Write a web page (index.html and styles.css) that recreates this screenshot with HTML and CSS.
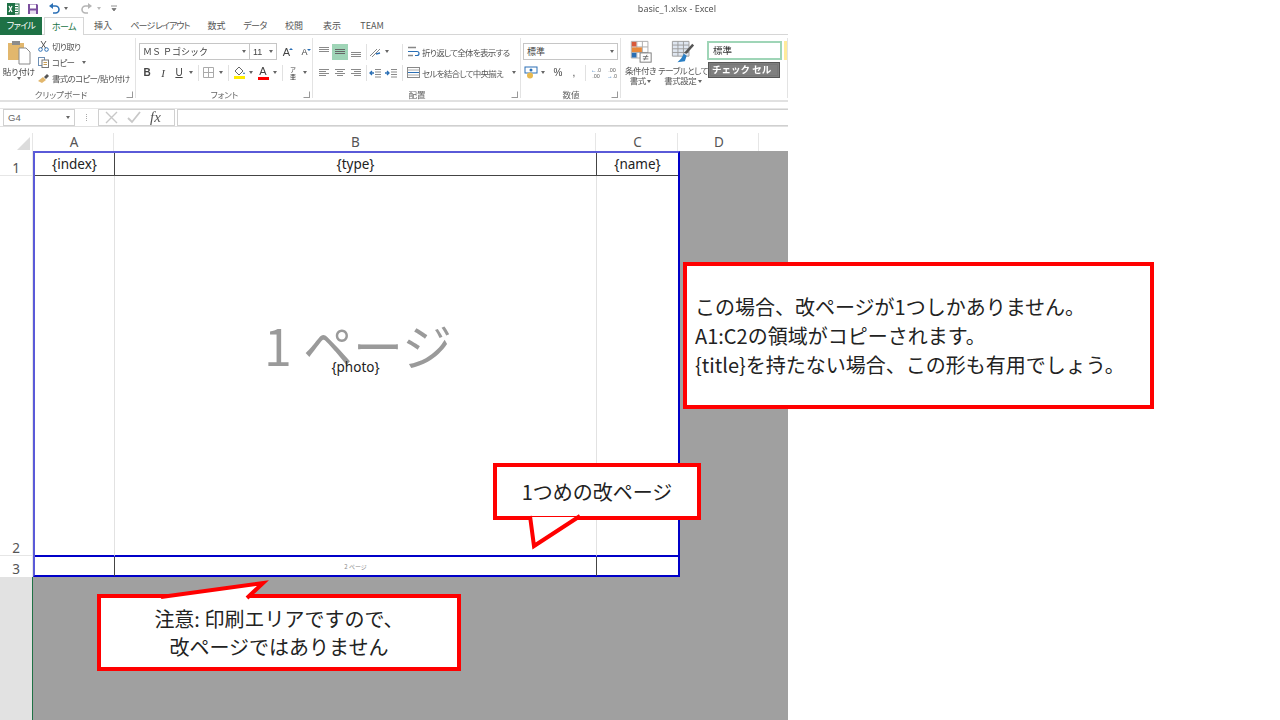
FILE: index.html
```html
<!DOCTYPE html>
<html lang="ja">
<head>
  <meta charset="UTF-8">
  <title>basic_1.xlsx - Excel</title>
  <link rel="stylesheet" href="styles.css">
</head>
<body>

  <div class="excel">
    <!-- Quick access bar -->
    <div class="qat">
      <svg class="qat-icon" width="14" height="14" viewBox="0 0 14 14"><rect x="6" y="2" width="7" height="10" fill="#fff" stroke="#1e7145"/><path d="M8 4.500h4M8 7h4M8 9.500h4" stroke="#1e7145"/><rect x="1" y="1" width="8" height="12" fill="#1e7145"/><path d="M3 4l3 6M6 4l-3 6" stroke="#fff" stroke-width="1.200"/></svg>
      <svg class="qat-icon save" width="12" height="12" viewBox="0 0 12 12"><path d="M1 1h9l1 1v9H1z" fill="#7b4f9e"/><rect x="3" y="1.500" width="6" height="4" fill="#fff"/><rect x="3" y="7.500" width="6" height="3.500" fill="#e6dcef"/></svg>
      <svg class="qat-icon undo" width="12" height="12" viewBox="0 0 12 12"><path d="M3 3h4.500a3 3 0 0 1 0 7H5" fill="none" stroke="#2a6fb5" stroke-width="1.600"/><path d="M5 0L1 3l4 3z" fill="#2a6fb5"/></svg>
      <span class="caret qat-caret"></span>
      <svg class="qat-icon redo" width="12" height="12" viewBox="0 0 12 12"><path d="M9 3H4.500a3 3 0 0 0 0 7H7" fill="none" stroke="#b5b5b5" stroke-width="1.600"/><path d="M7 0l4 3-4 3z" fill="#b5b5b5"/></svg>
      <span class="caret qat-caret light"></span>
      <svg class="qat-icon more" width="6" height="7" viewBox="0 0 6 7"><path d="M0 1h6M1 3.500h4L3 6z" stroke="#777" fill="#777" stroke-width=".8"/></svg>
      <div class="title">basic_1.xlsx - Excel</div>
    </div>

    <!-- Tabs -->
    <div class="tabs">
      <div class="tab file kana">ファイル</div>
      <div class="tab home kana">ホーム</div>
      <div class="tab">挿入</div>
      <div class="tab layout">ページ レイアウト</div>
      <div class="tab">数式</div>
      <div class="tab kana">データ</div>
      <div class="tab">校閲</div>
      <div class="tab">表示</div>
      <div class="tab">TEAM</div>
    </div>

    <!-- Ribbon -->
    <div class="ribbon">
      <div class="group clipboard">
        <div class="group-body">
          <div class="paste">
            <svg width="24" height="25" viewBox="0 0 24 25"><rect x="1" y="3" width="16" height="17" fill="#e2b76d"/><rect x="5" y="1" width="8" height="4" fill="#8c8c8c"/><path d="M12 8h7l4 4v12H12z" fill="#fff" stroke="#8a8a8a"/></svg>
            <span>貼り付け</span>
            <span class="caret"></span>
          </div>
          <div class="clip-list">
            <div class="clip-item">
              <svg width="11" height="11" viewBox="0 0 11 11"><circle cx="2.500" cy="8.500" r="1.800" fill="none" stroke="#2a6fb5"/><circle cx="8.500" cy="8.500" r="1.800" fill="none" stroke="#2a6fb5"/><path d="M3.500 7L8 0M7.500 7L3 0" stroke="#555"/></svg>
              切り取り
            </div>
            <div class="clip-item">
              <svg width="11" height="11" viewBox="0 0 11 11"><rect x=".5" y=".5" width="6" height="8" fill="#fff" stroke="#6d8fb5"/><rect x="4" y="3" width="6.500" height="7.500" fill="#fff" stroke="#777"/><path d="M5.500 5.500h3.500M5.500 7.500h3.500" stroke="#c69c55"/></svg>
              コピー <span class="caret"></span>
            </div>
            <div class="clip-item">
              <svg width="11" height="11" viewBox="0 0 11 11"><path d="M0 8l5-4 3 3-4 3z" fill="#e2b76d"/><path d="M6 4l3-3 2 2-3 3z" fill="#555"/></svg>
              書式のコピー/貼り付け
            </div>
          </div>
        </div>
        <div class="group-label">クリップボード</div>
        <span class="launcher"></span>
      </div>

      <div class="group font">
        <div class="group-body stack">
          <div class="row">
            <div class="select font-name">ＭＳ Ｐゴシック<span class="caret"></span></div>
            <div class="select font-size">11<span class="caret"></span></div>
            <span class="grow">A<i class="up"></i></span>
            <span class="grow small">A<i class="down"></i></span>
          </div>
          <div class="row low">
            <span class="btn bold">B</span>
            <span class="btn italic">I</span>
            <span class="btn under">U</span>
            <span class="caret-slot"><span class="caret"></span></span>
            <span class="sep"></span>
            <span class="btn">
              <svg width="12" height="12" viewBox="0 0 12 12"><path d="M.5.500h10v10H.5zM5.500.500v10M.5 5.500h10" fill="none" stroke="#aaa"/></svg>
            </span>
            <span class="caret-slot"><span class="caret"></span></span>
            <span class="sep"></span>
            <span class="btn color">
              <svg width="13" height="10" viewBox="0 0 13 10"><path d="M2 5l4-4 4 4-4 4z" fill="#fff" stroke="#666"/><path d="M11 6l1 2h-2z" fill="#2a6fb5"/></svg>
              <i class="swatch yellow"></i>
            </span>
            <span class="caret-slot"><span class="caret"></span></span>
            <span class="btn color letter">A<i class="swatch red"></i></span>
            <span class="caret-slot"><span class="caret"></span></span>
            <span class="sep"></span>
            <span class="btn phonetic">ア<br>亜</span>
            <span class="caret-slot"><span class="caret"></span></span>
          </div>
        </div>
        <div class="group-label">フォント</div>
        <span class="launcher"></span>
      </div>

      <div class="group align">
        <div class="group-body stack">
          <div class="row">
            <span class="btn"><svg width="12" height="12" viewBox="0 0 12 12"><path d="M1 1.500h10M1 3.500h10M1 5.500h10" stroke="#8a8a8a"/></svg></span>
            <span class="btn active"><svg width="12" height="12" viewBox="0 0 12 12"><path d="M1 3.500h10M1 5.500h10M1 7.500h10" stroke="#666"/></svg></span>
            <span class="btn"><svg width="12" height="12" viewBox="0 0 12 12"><path d="M1 6.500h10M1 8.500h10M1 10.500h10" stroke="#8a8a8a"/></svg></span>
            <span class="sep"></span>
            <span class="btn"><svg width="12" height="12" viewBox="0 0 12 12"><path d="M1 10l7-7M3 11l8-8" stroke="#888"/><path d="M7 8l4-1" stroke="#2a6fb5" stroke-width="1.500"/></svg></span>
            <span class="caret-slot"><span class="caret"></span></span>
            <span class="sep wide"></span>
            <span class="wrap-item">
              <svg width="13" height="13" viewBox="0 0 13 13"><path d="M1 2.500h8M1 10.500h5" stroke="#888" stroke-width="1.500"/><path d="M1 6.500h9a1.500 1.500 0 0 1 0 4H8" fill="none" stroke="#2a6fb5" stroke-width="1.200"/></svg>
              折り返して全体を表示する
            </span>
          </div>
          <div class="row low">
            <span class="btn"><svg width="12" height="12" viewBox="0 0 12 12"><path d="M1 2.500h10M1 4.500h7M1 6.500h10M1 8.500h7" stroke="#8a8a8a"/></svg></span>
            <span class="btn"><svg width="12" height="12" viewBox="0 0 12 12"><path d="M1 2.500h10M3 4.500h6M1 6.500h10M3 8.500h6" stroke="#8a8a8a"/></svg></span>
            <span class="btn"><svg width="12" height="12" viewBox="0 0 12 12"><path d="M1 2.500h10M4 4.500h7M1 6.500h10M4 8.500h7" stroke="#8a8a8a"/></svg></span>
            <span class="sep"></span>
            <span class="btn"><svg width="12" height="12" viewBox="0 0 12 12"><path d="M6 2.500h6M6 5h6M6 7.500h6M6 10h6" stroke="#8a8a8a"/><path d="M5 6H1M3 4L1 6l2 2" fill="none" stroke="#2a6fb5" stroke-width="1.300"/></svg></span>
            <span class="btn"><svg width="12" height="12" viewBox="0 0 12 12"><path d="M6 2.500h6M6 5h6M6 7.500h6M6 10h6" stroke="#8a8a8a"/><path d="M0 6h4M2 4l2 2-2 2" fill="none" stroke="#2a6fb5" stroke-width="1.300"/></svg></span>
            <span class="sep merge-sep"></span>
            <span class="wrap-item">
              <svg width="13" height="13" viewBox="0 0 13 13"><rect x=".5" y="1.500" width="12" height="10" fill="#fff" stroke="#888"/><path d="M1 6.500h11" stroke="#2a6fb5"/><path d="M.5 4h12M.5 9h12" stroke="#aaa"/></svg>
              セルを結合して中央揃え
              <span class="caret merge-caret"></span>
            </span>
          </div>
        </div>
        <div class="group-label">配置</div>
        <span class="launcher"></span>
      </div>

      <div class="group number">
        <div class="group-body stack">
          <div class="row">
            <div class="select number-format">標準<span class="caret"></span></div>
          </div>
          <div class="row low">
            <span class="btn"><svg width="14" height="13" viewBox="0 0 14 13"><rect x="1" y="1" width="12" height="6" fill="#fff" stroke="#2a6fb5"/><circle cx="7" cy="4" r="1.500" fill="#2a6fb5"/><circle cx="6" cy="9.500" r="3" fill="#e8b94e"/></svg></span>
            <span class="caret-slot"><span class="caret"></span></span>
            <span class="btn num-text pct">%</span>
            <span class="btn num-text">,</span>
            <span class="sep"></span>
            <span class="btn dec"><b>←</b>.0<br>.00</span>
            <span class="btn dec">.00<br><b>→</b>.0</span>
          </div>
        </div>
        <div class="group-label">数値</div>
        <span class="launcher"></span>
      </div>

      <div class="group styles">
        <div class="group-body">
          <div class="big-btn cond">
            <svg width="24" height="26" viewBox="0 0 24 26"><path d="M1.500 1.500h18v18h-18zM1.500 7.500h18M1.500 13.500h18M7.500 1.500v18M13.500 1.500v18" fill="#fff" stroke="#aaa"/><rect x="2" y="2" width="5" height="5" fill="#d8593a"/><rect x="2" y="8" width="11" height="5" fill="#e8893a"/><rect x="2" y="14" width="5" height="5" fill="#2a6fb5"/><rect x="11" y="14" width="12" height="10" fill="#fff" stroke="#777"/><path d="M14 18h6M14 20.500h6M18.500 16l-3 6" stroke="#555" stroke-width=".8"/></svg>
            <span>条件付き<br>書式 <i class="caret"></i></span>
          </div>
          <div class="big-btn table">
            <svg width="26" height="26" viewBox="0 0 26 26"><path d="M1.500 1.500h18v16h-18zM1.500 5.500h18M1.500 9.500h18M1.500 13.500h18M7.500 1.500v16M13.500 1.500v16" fill="#dfe6f0" stroke="#9a9a9a"/><path d="M23 4l2 2-8 9-3-1z" fill="#555"/><path d="M14 15l3 2-2 6-8 1 4-4z" fill="#2a7fc5"/></svg>
            <span>テーブルとして<br>書式設定 <i class="caret"></i></span>
          </div>
          <div class="gallery">
            <div class="gallery-row">
              <div class="style-normal">標準</div>
              <div class="style-yellow"></div>
            </div>
            <div class="style-check">チェック セル</div>
          </div>
        </div>
      </div>
    </div>

    <!-- Formula bar -->
    <div class="formula-bar">
      <div class="name-box">G4<span class="caret"></span></div>
      <span class="dots"></span>
      <div class="fx-box">
        <svg width="13" height="13" viewBox="0 0 13 13"><path d="M1 1l11 11M12 1L1 12" stroke="#c8c8c8" stroke-width="1.400"/></svg>
        <svg width="14" height="13" viewBox="0 0 14 13"><path d="M1 7l4 4 8-10" fill="none" stroke="#c8c8c8" stroke-width="1.800"/></svg>
        <span class="fx">fx</span>
      </div>
      <div class="formula-input"></div>
    </div>

    <!-- Sheet -->
    <div class="col-heads">
      <div class="corner"><i></i></div>
      <div class="col-head a">A</div>
      <div class="col-head b">B</div>
      <div class="col-head c">C</div>
      <div class="col-head d">D</div>
    </div>
    <div class="sheet">
      <div class="row-heads">
        <div class="row-head r1">1</div>
        <div class="row-head r2">2</div>
        <div class="row-head r3">3</div>
        <div class="row-rest"></div>
      </div>
      <div class="canvas">
        <div class="print-area">
          <div class="cell">{index}</div>
          <div class="cell">{type}</div>
          <div class="cell last">{name}</div>
          <div class="cell tall"></div>
          <div class="cell tall photo">
            <div class="page-mark">1 ページ</div>
            <div class="photo-name">{photo}</div>
          </div>
          <div class="cell tall last"></div>
          <div class="cell foot"></div>
          <div class="cell foot tiny">2 ページ</div>
          <div class="cell foot last"></div>
        </div>
      </div>
    </div>
  </div>

  <!-- Callouts over the screenshot -->
  <div class="callout note-main">
    この場合、改ページが1つしかありません。<br>
    A1:C2の領域がコピーされます。<br>
    {title}を持たない場合、この形も有用でしょう。
  </div>

  <div class="callout note-break">
    <svg class="tail" width="208" height="100" viewBox="0 0 208 100"><path d="M37 54l4 30 46-30z" fill="#fff"/><path d="M37 53l4 30 46-30" fill="none" stroke="#f00" stroke-width="4"/></svg>
    <span class="note-text">1つめの改ページ</span>
  </div>

  <div class="callout note-area">
    <svg class="tail" width="200" height="30" viewBox="0 0 200 30"><path d="M64 4L166-11 150 4z" fill="#fff"/><path d="M64 3L166-11 150 4" fill="none" stroke="#f00" stroke-width="4" stroke-miterlimit="10"/></svg>
    <span class="note-text">注意: 印刷エリアですので、<br>改ページではありません</span>
  </div>

</body>
</html>
```

FILE: styles.css
```css
/* General */
html, body {
  margin: 0;
  height: 100%;
  overflow: hidden;
  background: #fff;
}

body {
  position: relative;
  font-family: "Noto Sans CJK JP", "Noto Sans", sans-serif;
  color: #444;
}

.excel {
  width: 788px;
  height: 720px;
  display: flex;
  flex-direction: column;
  overflow: hidden;
}

.caret {
  display: inline-block;
  width: 0;
  height: 0;
  border-left: 2.5px solid transparent;
  border-right: 2.5px solid transparent;
  border-top: 3px solid #666;
  vertical-align: middle;
}

/* Quick access bar */
.qat {
  height: 17px;
  display: flex;
  align-items: center;
  padding-left: 6px;
  flex: none;
  filter: blur(.3px);
}

.qat-icon.save { margin-left: 7px; }
.qat-icon.undo { margin-left: 9px; }
.qat-icon.redo { margin-left: 13px; }
.qat-icon.more { margin-left: 10px; }

.qat-caret { margin-left: 4px; }
.qat-caret.light { border-top-color: #bbb; }

.title {
  margin-left: auto;
  margin-right: 72px;
  font-size: 9px;
  color: #555;
  font-family: "Noto Sans", sans-serif;
}

/* Tabs */
.tabs {
  height: 18px;
  flex: none;
  display: grid;
  grid-template-columns: 44px 40px 38px 76px 37px 40px 38px 38px 42px;
  box-shadow: inset 0 -1px #d6d6d6;
  font-feature-settings: "palt";
}

.tab {
  font-size: 9px;
  line-height: 18px;
  text-align: center;
  color: #555;
  white-space: nowrap;
}

.tab.kana { letter-spacing: -.6px; }
.tab.layout { letter-spacing: -1px; }

.tab.file {
  width: 42px;
  background: #1e7145;
  color: #fff;
}

.tab.home {
  color: #217346;
  background: #fff;
  border: 1px solid #d6d6d6;
  border-bottom: none;
  line-height: 17px;
  height: 18px;
  box-sizing: border-box;
}

/* Ribbon */
.ribbon {
  height: 65px;
  flex: none;
  display: grid;
  grid-template-columns: 136px 177px 208px 100px 1fr;
  border-bottom: 2px solid #e1e1e1;
  overflow: hidden;
  font-feature-settings: "palt";
  filter: blur(.3px);
}

.group {
  position: relative;
  display: flex;
  flex-direction: column;
  font-size: 9px;
}

.group::after {
  content: "";
  position: absolute;
  right: 0;
  top: 3px;
  bottom: 2px;
  width: 1px;
  background: #e3e3e3;
}

.group-body {
  height: 53px;
  display: flex;
}

.group-body.stack {
  flex-direction: column;
  padding-top: 8px;
  box-sizing: border-box;
}

.group-label {
  font-size: 8.5px;
  line-height: 12px;
  text-align: center;
  color: #666;
}

.launcher {
  position: absolute;
  right: 3px;
  bottom: 2px;
  width: 5px;
  height: 5px;
  border: 1px solid #999;
  border-top-color: transparent;
  border-left-color: transparent;
}

/* Clipboard */
.clipboard .group-label {
  padding-right: 14px;
}

.paste {
  width: 38px;
  flex: none;
  display: flex;
  flex-direction: column;
  align-items: center;
  padding-top: 5px;
  font-size: 8.5px;
  line-height: 11px;
  box-sizing: border-box;
}

.paste span:nth-child(2) {
  margin-top: 1px;
  white-space: nowrap;
}

.clip-list {
  padding-top: 3px;
}

.clip-item {
  height: 16px;
  display: flex;
  align-items: center;
  gap: 3px;
  font-size: 8.5px;
  letter-spacing: -.7px;
  white-space: nowrap;
  color: #555;
}

.clip-item .caret {
  margin-left: 5px;
}

/* Ribbon rows */
.row {
  height: 17px;
  display: flex;
  align-items: center;
  padding-left: 3px;
  flex: none;
}

.row.low {
  margin-top: 4px;
}

.btn {
  width: 16px;
  height: 16px;
  flex: none;
  display: flex;
  align-items: center;
  justify-content: center;
  font-family: "Liberation Sans", sans-serif;
  font-size: 10px;
  box-sizing: border-box;
}

.btn.active {
  background: #9fd5b7;
}

.bold { font-weight: bold; }
.italic { font-style: italic; font-family: "Liberation Serif", serif; font-size: 11px; }
.under { text-decoration: underline; }

.caret-slot {
  width: 8px;
  height: 16px;
  flex: none;
  display: flex;
  align-items: center;
  justify-content: center;
}

.sep {
  width: 1px;
  height: 16px;
  background: #e1e1e1;
  margin: 0 2px 0 3px;
  flex: none;
}

.align .sep { margin: 0 0 0 2px; }
.align .sep.wide { margin: 0 4px 0 11px; }
.align .sep.merge-sep { margin: 0 4px 0 3px; }

.select {
  height: 17px;
  border: 1px solid #c6c6c6;
  box-sizing: border-box;
  display: flex;
  align-items: center;
  justify-content: space-between;
  padding: 0 3px;
  font-size: 9px;
  background: #fff;
  flex: none;
}

.font-name {
  width: 111px;
  font-feature-settings: normal;
}

.font-size {
  width: 28px;
  margin-left: -1px;
  font-family: "Liberation Sans", sans-serif;
}

.grow {
  width: 17px;
  margin-left: 1px;
  font-size: 11px;
  text-align: center;
  font-family: "Liberation Sans", sans-serif;
  position: relative;
}

.grow.small {
  font-size: 9px;
}

.grow i {
  position: absolute;
  right: 2px;
  top: 2px;
  width: 0;
  height: 0;
  border-left: 2px solid transparent;
  border-right: 2px solid transparent;
}

.grow i.up { border-bottom: 2px solid #2a6fb5; }
.grow i.down { border-top: 2px solid #2a6fb5; }

.btn.color {
  flex-direction: column;
}

.btn.letter {
  font-size: 11px;
  line-height: 11px;
}

.swatch {
  display: block;
  width: 11px;
  height: 3px;
  margin-top: 0;
}

.swatch.yellow { background: #ffec00; }
.swatch.red { background: #f00; }

.phonetic {
  font-family: "Noto Sans CJK JP", sans-serif;
  font-size: 6px;
  line-height: 7px;
  text-align: center;
}

.wrap-item {
  display: flex;
  align-items: center;
  gap: 2px;
  font-size: 8.5px;
  letter-spacing: -.7px;
  white-space: nowrap;
  color: #555;
}

.merge-caret {
  margin-left: 7px;
}

/* Number */
.number .row {
  padding-left: 2px;
}

.number-format {
  width: 95px;
}

.num-text {
  font-size: 10px;
}

.pct {
  margin-left: 3px;
}

.dec {
  font-size: 5.5px;
  line-height: 6px;
  text-align: center;
  display: block;
  padding-top: 2px;
  color: #666;
}

.dec b {
  color: #2a6fb5;
  font-weight: normal;
}

/* Styles */
.big-btn {
  flex: none;
  display: flex;
  flex-direction: column;
  align-items: center;
  padding-top: 5px;
  font-size: 8.5px;
  letter-spacing: -.5px;
  line-height: 10px;
  text-align: center;
  white-space: nowrap;
  color: #555;
}

.big-btn svg {
  margin-bottom: 1px;
  height: 24px;
}

.big-btn i {
  vertical-align: middle;
}

.big-btn.cond { width: 39px; }
.big-btn.table { width: 46px; }

.gallery {
  margin-left: 1px;
  padding-top: 6px;
  flex: 1;
  min-width: 0;
}

.gallery-row {
  display: flex;
  gap: 2px;
}

.style-normal {
  width: 75px;
  height: 19px;
  border: 2px solid #9fd5b7;
  box-sizing: border-box;
  font-size: 9.5px;
  line-height: 15px;
  padding-left: 4px;
  color: #333;
  flex: none;
}

.style-yellow {
  flex: 1;
  height: 19px;
  background: #ffeb9c;
}

.style-check {
  width: 72px;
  height: 16px;
  margin: 2px 0 0 1px;
  background: #7f7f7f;
  border: 1px solid #555;
  outline: 1px solid #777;
  outline-offset: -3px;
  box-sizing: border-box;
  color: #fff;
  font-size: 9.5px;
  font-weight: bold;
  line-height: 13px;
  padding-left: 3px;
  white-space: nowrap;
  font-feature-settings: normal;
}

/* Formula bar */
.formula-bar {
  height: 17px;
  flex: none;
  margin-top: 6px;
  display: flex;
  align-items: stretch;
  border-top: 1px solid #e6e6e6;
  border-bottom: 1px solid #e1e1e1;
  box-sizing: content-box;
  padding-left: 3px;
  filter: blur(.3px);
}

.name-box, .fx-box, .formula-input {
  border: 1px solid #d0d0d0;
  box-sizing: border-box;
  background: #fff;
}

.name-box {
  width: 72px;
  display: flex;
  align-items: center;
  justify-content: space-between;
  padding: 0 4px;
  font-size: 9.5px;
  font-family: "Liberation Sans", sans-serif;
  color: #666;
}

.dots {
  width: 1px;
  margin: 5px 10px 5px 11px;
  border-left: 1px dotted #aaa;
}

.fx-box {
  width: 77px;
  display: flex;
  align-items: center;
  gap: 9px;
  padding-left: 6px;
}

.fx {
  font-family: "Liberation Serif", serif;
  font-style: italic;
  font-size: 15px;
  color: #555;
}

.formula-input {
  flex: 1;
  margin-left: 2px;
  border-right: none;
}

/* Sheet headers */
.col-heads {
  height: 18px;
  flex: none;
  margin-top: 6px;
  display: grid;
  grid-template-columns: 33px 81px 482px 82px 81px 1fr;
  font-size: 13.5px;
  color: #555;
  font-family: "Noto Sans", sans-serif;
  box-sizing: content-box;
}

.corner {
  border-right: 1px solid #e6e6e6;
  position: relative;
}

.corner i {
  position: absolute;
  right: 2px;
  bottom: 1px;
  width: 0;
  height: 0;
  border-left: 13px solid transparent;
  border-bottom: 13px solid #dcdcdc;
}

.col-head {
  text-align: center;
  line-height: 18px;
  padding-left: 2px;
  border-right: 1px solid #e6e6e6;
}

.sheet {
  flex: 1;
  display: flex;
  min-height: 0;
}

.row-heads {
  width: 32px;
  flex: none;
  display: flex;
  flex-direction: column;
  border-right: 1px solid #1e7145;
}

.row-head {
  font-size: 13.5px;
  line-height: 14px;
  font-family: "Noto Sans", sans-serif;
  color: #555;
  text-align: center;
  flex: none;
  display: flex;
  align-items: flex-end;
  justify-content: center;
  box-sizing: border-box;
  background: #fff;
  border-right: 1px solid #e6e6e6;
  margin-right: -1px;
  position: relative;
}

.row-head.r1 { height: 25px; border-bottom: 1px solid #e6e6e6; }
.row-head.r2 { height: 380px; border-bottom: 1px solid #e6e6e6; }
.row-head.r3 { height: 21px; padding-bottom: 1px; }

.row-rest {
  flex: 1;
  background: #e2e2e2;
}

.canvas {
  flex: 1;
  background: #a0a0a0;
}

/* Print area */
.print-area {
  width: 647px;
  height: 426px;
  box-sizing: border-box;
  background: #fff;
  border: 2px solid #0000c8;
  border-top-color: #5a5ad8;
  border-left-color: #5a5ad8;
  display: grid;
  grid-template-columns: 80px 482px 1fr;
  grid-template-rows: 23px 381px 1fr;
  font-size: 13.5px;
  color: #222;
  font-family: "Noto Sans", sans-serif;
}

.cell {
  border-right: 1px solid #444;
  border-bottom: 1px solid #444;
  text-align: center;
  line-height: 22px;
}

.cell.last {
  border-right: none;
}

.cell.tall {
  border-right-color: #e2e2e2;
  border-bottom: 2px solid #0000c8;
}

.cell.tall.last {
  border-right: none;
}

.cell.foot {
  border-bottom: none;
}

.tiny {
  font-size: 6px;
  color: #888;
  line-height: 19px;
  font-family: "Noto Sans CJK JP", sans-serif;
}

.photo {
  display: flex;
  flex-direction: column;
  align-items: center;
  justify-content: center;
  padding-bottom: 40px;
  box-sizing: border-box;
}

.page-mark {
  font-size: 50px;
  line-height: 56px;
  margin-left: 5px;
  color: #9a9a9a;
  font-family: "Noto Sans CJK JP", sans-serif;
  white-space: nowrap;
}

.photo-name {
  margin-top: -14px;
  line-height: 18px;
}

/* Callouts */
.callout {
  position: absolute;
  box-sizing: border-box;
  background: #fff;
  border: 4px solid #f00;
  font-size: 20px;
  color: #222;
}

.tail {
  position: absolute;
  left: -4px;
  top: -4px;
  overflow: visible;
}

.note-text {
  position: relative;
}

.note-main {
  left: 683px;
  top: 262px;
  width: 471px;
  height: 147px;
  padding: 26px 0 0 8px;
  line-height: 29px;
}

.note-break {
  left: 493px;
  top: 463px;
  width: 208px;
  height: 57px;
  text-align: center;
  line-height: 49px;
}

.note-area {
  left: 97px;
  top: 594px;
  width: 364px;
  height: 77px;
  text-align: center;
  line-height: 28px;
  padding-top: 7px;
}
```
